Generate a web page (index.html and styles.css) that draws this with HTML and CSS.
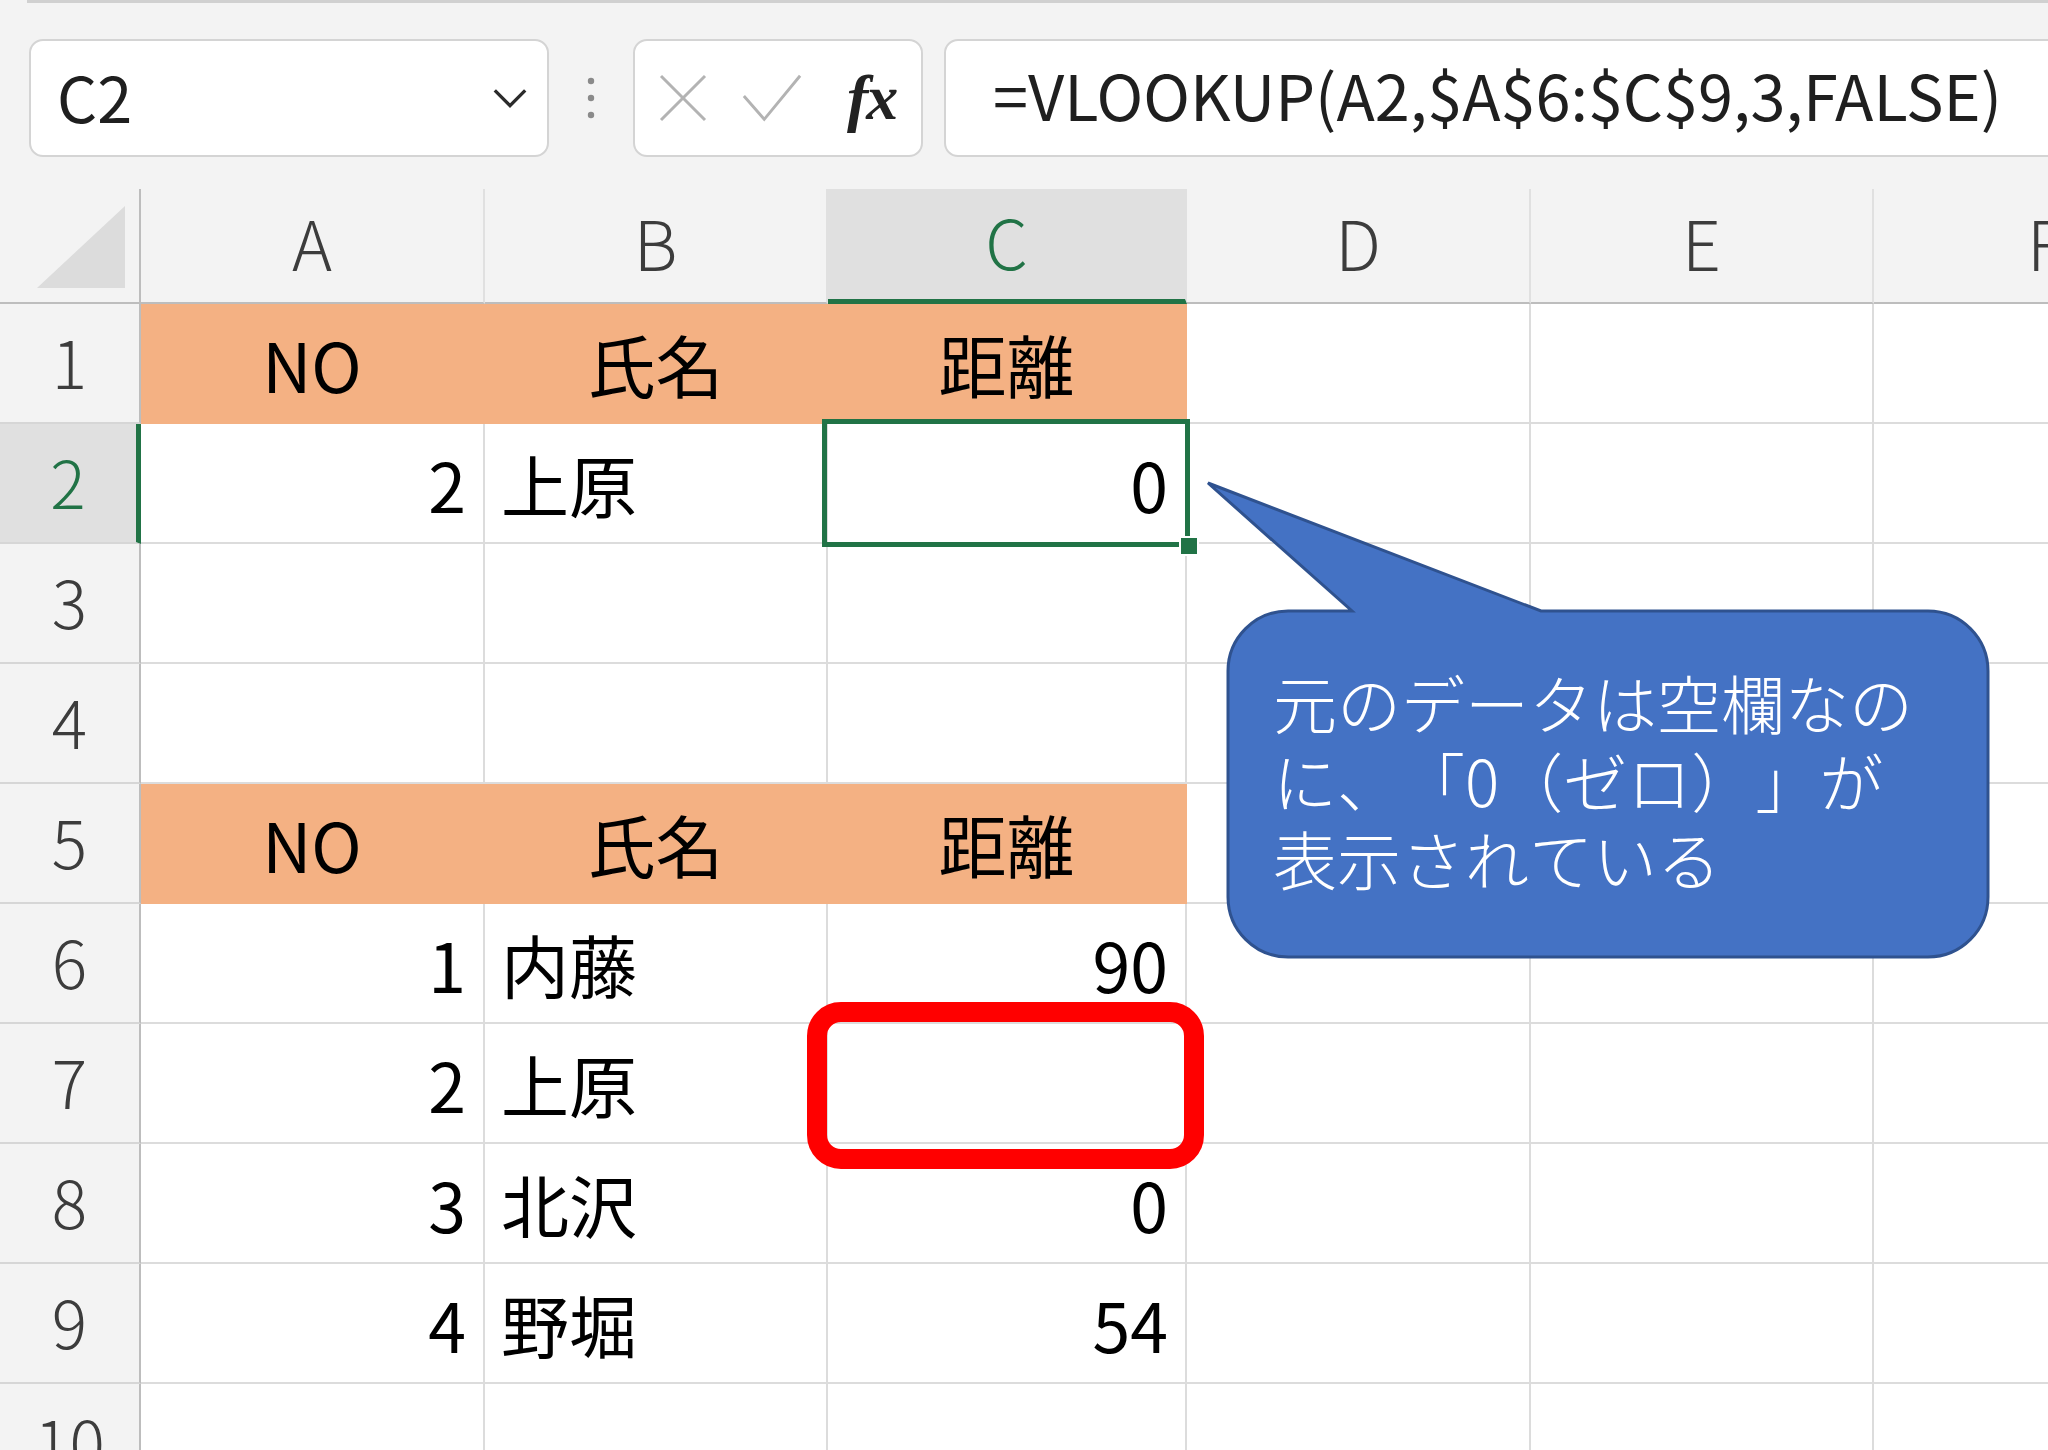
FILE: index.html
```html
<!DOCTYPE html>
<html lang="ja">
<head>
    <meta charset="UTF-8">
    <title>VLOOKUP 空欄が0になる例</title>
    <link rel="stylesheet" href="styles.css">
</head>
<body>
    <div class="ribbon-edge"></div>
    <div class="toolbar">
        <div class="namebox">
            <span class="ref">C2</span>
            <svg class="chevron" viewBox="0 0 40 24"><polyline points="4,4 20,20 36,4"/></svg>
        </div>
        <div class="grip">
            <svg viewBox="0 0 10 44"><circle cx="5" cy="5" r="3.2"/><circle cx="5" cy="22" r="3.2"/><circle cx="5" cy="39" r="3.2"/></svg>
        </div>
        <div class="fxbox">
            <svg class="cancel" viewBox="0 0 52 52"><line x1="4" y1="4" x2="48" y2="48"/><line x1="48" y1="4" x2="4" y2="48"/></svg>
            <svg class="enter" viewBox="0 0 64 52"><polyline points="3,24 24,48 61,3"/></svg>
            <span class="fx">fx</span>
        </div>
        <div class="formula">=VLOOKUP(A2,$A$6:$C$9,3,FALSE)</div>
    </div>

    <div class="sheet">
        <!-- column headers -->
        <div class="corner"><svg viewBox="0 0 88 82"><polygon points="88,0 88,82 0,82"/></svg></div>
        <div class="colhead">A</div>
        <div class="colhead">B</div>
        <div class="colhead active">C</div>
        <div class="colhead">D</div>
        <div class="colhead">E</div>
        <div class="colhead">F</div>

        <!-- 1 -->
        <div class="rowhead">1</div>
        <div class="cell hdr">NO</div>
        <div class="cell hdr">氏名</div>
        <div class="cell hdr">距離</div>
        <div class="cell"></div>
        <div class="cell"></div>
        <div class="cell"></div>

        <!-- 2 -->
        <div class="rowhead active">2</div>
        <div class="cell num">2</div>
        <div class="cell txt">上原</div>
        <div class="cell num sel">0</div>
        <div class="cell"></div>
        <div class="cell"></div>
        <div class="cell"></div>

        <!-- 3 -->
        <div class="rowhead">3</div>
        <div class="cell"></div>
        <div class="cell"></div>
        <div class="cell"></div>
        <div class="cell"></div>
        <div class="cell"></div>
        <div class="cell"></div>

        <!-- 4 -->
        <div class="rowhead">4</div>
        <div class="cell"></div>
        <div class="cell"></div>
        <div class="cell"></div>
        <div class="cell"></div>
        <div class="cell"></div>
        <div class="cell"></div>

        <!-- 5 -->
        <div class="rowhead">5</div>
        <div class="cell hdr">NO</div>
        <div class="cell hdr">氏名</div>
        <div class="cell hdr">距離</div>
        <div class="cell"></div>
        <div class="cell"></div>
        <div class="cell"></div>

        <!-- 6 -->
        <div class="rowhead">6</div>
        <div class="cell num">1</div>
        <div class="cell txt">内藤</div>
        <div class="cell num">90</div>
        <div class="cell"></div>
        <div class="cell"></div>
        <div class="cell"></div>

        <!-- 7 -->
        <div class="rowhead">7</div>
        <div class="cell num">2</div>
        <div class="cell txt">上原</div>
        <div class="cell num"></div>
        <div class="cell"></div>
        <div class="cell"></div>
        <div class="cell"></div>

        <!-- 8 -->
        <div class="rowhead">8</div>
        <div class="cell num">3</div>
        <div class="cell txt">北沢</div>
        <div class="cell num">0</div>
        <div class="cell"></div>
        <div class="cell"></div>
        <div class="cell"></div>

        <!-- 9 -->
        <div class="rowhead">9</div>
        <div class="cell num">4</div>
        <div class="cell txt">野堀</div>
        <div class="cell num">54</div>
        <div class="cell"></div>
        <div class="cell"></div>
        <div class="cell"></div>

        <!-- 10 -->
        <div class="rowhead">10</div>
        <div class="cell"></div>
        <div class="cell"></div>
        <div class="cell"></div>
        <div class="cell"></div>
        <div class="cell"></div>
        <div class="cell"></div>
    </div>

    <div class="callout">
        <svg viewBox="0 0 790 480">
            <path d="M83 131 L147 131 L3 3 L336 131 L723 131 A60 60 0 0 1 783 191 L783 417 A60 60 0 0 1 723 477 L83 477 A60 60 0 0 1 23 417 L23 191 A60 60 0 0 1 83 131 Z"/>
        </svg>
        <div class="callout-text">元のデータは空欄なの<br>に、「0（ゼロ）」が<br>表示されている</div>
    </div>

    <div class="mark"></div>
</body>
</html>
```

FILE: styles.css
```css
body {
    margin: 0;
    width: 2048px;
    height: 1450px;
    overflow: hidden;
    position: relative;
    background: #f3f3f3;
    font-family: "Noto Sans CJK JP", "Noto Sans", sans-serif;
    color: #000;
}
.ribbon-edge {
    height: 3px;
    margin-left: 27px;
    background: #d0d0d0;
}
.toolbar {
    height: 186px;
    box-sizing: border-box;
    padding: 36px 0 0 29px;
    display: flex;
    align-items: flex-start;
}
.toolbar > * {
    flex-shrink: 0;
}
.namebox, .fxbox, .formula {
    height: 118px;
    box-sizing: border-box;
    background: #fff;
    border: 2px solid #d4d4d4;
    border-radius: 14px;
    display: flex;
    align-items: center;
}
.namebox {
    width: 520px;
    padding: 0 18px 6px 26px;
    justify-content: space-between;
}
.ref {
    font-size: 63px;
    color: #1f1f1f;
}
.chevron {
    width: 38px;
    height: 24px;
    fill: none;
    stroke: #2b2b2b;
    stroke-width: 3.5;
    margin-top: 6px;
}
.grip {
    width: 84px;
    height: 118px;
    display: flex;
    align-items: center;
    justify-content: center;
}
.grip svg {
    width: 10px;
    height: 44px;
    fill: #8a8a8a;
}
.fxbox {
    width: 290px;
    padding-left: 22px;
    gap: 36px;
}
.cancel {
    width: 52px;
    height: 52px;
    stroke: #b3b3b3;
    stroke-width: 3;
}
.enter {
    width: 62px;
    height: 52px;
    fill: none;
    stroke: #b3b3b3;
    stroke-width: 3;
    margin-left: -4px;
}
.fx {
    font-family: "Liberation Serif", serif;
    font-style: italic;
    font-weight: 700;
    font-size: 64px;
    color: #222;
    letter-spacing: -2px;
    margin-left: 8px;
}
.formula {
    margin-left: 21px;
    width: 1300px;
    padding: 0 0 10px 47px;
    font-size: 63px;
    color: #1f1f1f;
}

.sheet {
    display: grid;
    grid-template-columns: 141px 344px 343px 359px 344px 343px 344px;
    grid-template-rows: 115px repeat(10, 120px);
}
.sheet > div {
    box-sizing: border-box;
    display: flex;
    align-items: center;
}
.corner {
    justify-content: flex-end;
    align-items: flex-end !important;
    padding: 0 14px 14px 0;
    border-right: 2px solid #bdbdbd;
    border-bottom: 2px solid #bdbdbd;
}
.corner svg {
    width: 88px;
    height: 82px;
    fill: #dcdcdc;
}
.colhead {
    justify-content: center;
    font-size: 68px;
    font-weight: 300;
    color: #3c3c3c;
    border-right: 2px solid #e0e0e0;
    border-bottom: 2px solid #bdbdbd;
    padding-bottom: 8px;
}
.colhead.active {
    background: #e0e0e0;
    color: #217346;
    border-bottom: 5px solid #217346;
}
.rowhead {
    justify-content: center;
    font-size: 66px;
    font-weight: 300;
    color: #3c3c3c;
    border-right: 2px solid #bdbdbd;
    border-bottom: 2px solid #d6d6d6;
    padding-bottom: 6px;
}
.rowhead.active {
    background: #e0e0e0;
    color: #217346;
    border-right: 5px solid #217346;
}
.cell {
    background: #fff;
    border-right: 2px solid #dcdcdc;
    border-bottom: 2px solid #dcdcdc;
    padding: 0 17px;
    font-size: 68px;
}
.cell.hdr {
    background: #f4b183;
    border-color: #f4b183;
    justify-content: center;
}
.cell.num {
    justify-content: flex-end;
}
.cell.txt {
    justify-content: flex-start;
    padding-left: 16px;
}
.cell.sel {
    position: relative;
}
.cell.sel::after {
    content: "";
    position: absolute;
    left: -6px;
    top: -5px;
    right: -5px;
    bottom: -5px;
    border: 5px solid #217346;
}
.cell.sel::before {
    content: "";
    position: absolute;
    right: -14px;
    bottom: -14px;
    width: 16px;
    height: 16px;
    background: #217346;
    border: 2px solid #fff;
    z-index: 2;
}

.callout {
    position: absolute;
    left: 1205px;
    top: 480px;
    width: 790px;
    height: 480px;
}
.callout svg {
    position: absolute;
    left: 0;
    top: 0;
    width: 790px;
    height: 480px;
    fill: #4472c4;
    stroke: #2f528f;
    stroke-width: 3;
}
.callout-text {
    position: absolute;
    left: 68px;
    top: 182px;
    font-size: 64px;
    line-height: 78px;
    font-weight: 300;
    color: #fff;
    white-space: nowrap;
    text-spacing-trim: space-all;
    font-kerning: none;
}
.mark {
    position: absolute;
    left: 807px;
    top: 1002px;
    width: 397px;
    height: 167px;
    box-sizing: border-box;
    border: 20px solid #ff0000;
    border-radius: 34px;
}
```
